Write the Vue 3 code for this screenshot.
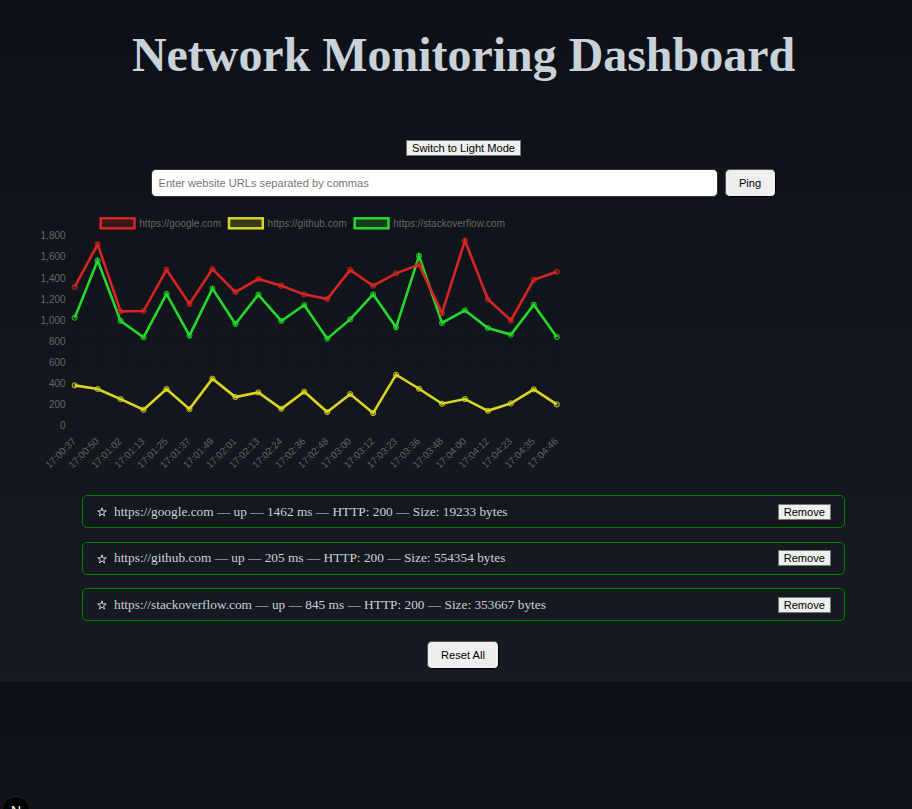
<script setup>
import { ref } from 'vue'

const urls = ref('')

const times = [
  '17:00:37', '17:00:50', '17:01:02', '17:01:13', '17:01:25', '17:01:37', '17:01:49', '17:02:01',
  '17:02:13', '17:02:24', '17:02:36', '17:02:48', '17:03:00', '17:03:12', '17:03:23', '17:03:36',
  '17:03:48', '17:04:00', '17:04:12', '17:04:23', '17:04:35', '17:04:46',
]

const series = [
  {
    url: 'https://google.com', color: '#d92424', legendX: 101, size: 19233,
    data: [1318, 1722, 1087, 1090, 1482, 1157, 1488, 1270, 1394, 1330, 1248, 1204, 1479, 1330, 1447, 1530, 1071, 1757, 1201, 1002, 1387, 1462],
  },
  {
    url: 'https://github.com', color: '#d9d521', legendX: 229.3, size: 554354,
    data: [386, 351, 256, 155, 351, 161, 449, 275, 319, 164, 326, 133, 303, 123, 487, 354, 212, 256, 145, 215, 348, 205],
  },
  {
    url: 'https://stackoverflow.com', color: '#24d92b', legendX: 355, size: 353667,
    data: [1027, 1568, 996, 841, 1252, 857, 1302, 967, 1245, 996, 1147, 828, 1011, 1248, 936, 1612, 977, 1097, 929, 866, 1150, 845],
  },
]

const ticks = [0, 200, 400, 600, 800, 1000, 1200, 1400, 1600, 1800]

// plot area, in chart coordinates
const left = 74.7
const step = 22.955
const bottom = 221.1
const height = 190

const px = (i) => left + i * step
const py = (v) => bottom - (v / 1800) * height
const points = (data) => data.map((v, i) => `${px(i)},${py(v)}`).join(' ')
const last = (data) => data[data.length - 1]
</script>

<template>
  <main class="page">
    <h1 class="title">Network Monitoring Dashboard</h1>
    <button class="plain">Switch to Light Mode</button>
    <form class="ping-form" @submit.prevent>
      <input v-model="urls" class="urls" placeholder="Enter website URLs separated by commas" />
      <button class="solid ping">Ping</button>
    </form>

    <svg class="chart" width="600" height="280" viewBox="0 0 600 280">
      <g class="grid">
        <line v-for="t in ticks" :key="t" :x1="left - 6.7" :x2="px(21)" :y1="py(t)" :y2="py(t)" />
        <line v-for="(t, i) in times" :key="t" :x1="px(i)" :x2="px(i)" :y1="py(1800)" :y2="bottom + 6.7" />
      </g>
      <g v-for="s in series" :key="s.url">
        <rect
          :x="s.legendX - 0.3" y="13.3" width="33.8" height="10" stroke-width="2.5"
          :stroke="s.color" :fill="s.color" fill-opacity="0.2"
        />
        <text class="label" :x="s.legendX + 38.3" y="21.5">{{ s.url }}</text>
      </g>
      <text v-for="t in ticks" :key="t" class="label" text-anchor="end" x="65.6" :y="py(t) + 3.2">{{ t.toLocaleString('en-US') }}</text>
      <text
        v-for="(t, i) in times" :key="t" class="label tilted" text-anchor="end"
        :transform="`translate(${px(i) + 1.8} 236.8) rotate(-45)`"
      >{{ t }}</text>
      <g v-for="s in [...series].reverse()" :key="s.url">
        <polyline :points="points(s.data)" fill="none" :stroke="s.color" stroke-width="2.6" />
        <circle
          v-for="(v, i) in s.data" :key="i" :cx="px(i)" :cy="py(v)" r="2.6"
          :fill="s.color" fill-opacity="0.2" :stroke="s.color" stroke-opacity="0.85" stroke-width="1"
        />
      </g>
    </svg>

    <ul class="sites">
      <li v-for="s in series" :key="s.url" class="site">
        <svg class="star" viewBox="0 0 10 10">
          <path d="M5 .8 6 3.9H9.3L6.6 5.8 7.6 9 5 7.1 2.4 9 3.4 5.8.7 3.9H4Z" />
        </svg>
        <span class="status">{{ s.url }} — up — {{ last(s.data) }} ms — HTTP: 200 — Size: {{ s.size }} bytes</span>
        <button class="plain">Remove</button>
      </li>
    </ul>
    <button class="solid reset">Reset All</button>
    <div class="badge">N</div>
  </main>
</template>

<style>
html {
  height: 809px;
  overflow: hidden;
  background: linear-gradient(to bottom, #0d1117, #161b22) 0 0 / 100% 682px repeat-y;
}
</style>

<style scoped>
.page {
  box-sizing: border-box;
  position: relative;
  height: 809px;
  padding-left: 15px;
  overflow: hidden;
  display: flex;
  flex-direction: column;
  align-items: center;
  color: #c9d1d9;
  font-family: "Liberation Serif", "Times New Roman", serif;
}

.title {
  margin: 27px 0 58px;
  font-size: 47.95px;
  line-height: 55px;
  white-space: nowrap;
}

button,
input {
  box-sizing: border-box;
  margin: 0;
  font-family: "Liberation Sans", Arial, sans-serif;
  font-size: 11.1px;
}

button {
  color: #000;
  background: #efefef;
  white-space: nowrap;
}

.plain {
  height: 16px;
  padding: 0 5px;
  border: 1px solid #767676;
  line-height: 14px;
}

.ping-form {
  display: flex;
  gap: 7px;
  width: 624px;
  margin-top: 13px;
}

.urls {
  flex: 1;
  height: 28px;
  margin-left: -1px;
  padding: 0 7px;
  border: 1px solid #333;
  border-radius: 5px;
  background: #fff;
}

.urls::placeholder {
  color: #757575;
}

.solid {
  height: 28px;
  padding: 0;
  border: 1px solid #000;
  border-top-color: #555;
  border-left-color: #555;
  border-radius: 5px;
}

.ping {
  width: 51px;
}

.chart {
  flex: none;
  align-self: flex-start;
  margin: 8px 0 10.2px -15px;
}

.grid {
  stroke: rgba(0, 0, 0, 0.08);
  stroke-width: 0.9;
}

.label {
  fill: #666;
  font: 10px "Liberation Sans", Arial, sans-serif;
}

.tilted {
  font-size: 9.8px;
}

.sites {
  width: 763px;
  margin: 0;
  padding: 0;
  list-style: none;
  display: flex;
  flex-direction: column;
  gap: 13.5px;
}

.site {
  box-sizing: border-box;
  height: 33px;
  padding: 0 13px 0 14px;
  border: 1px solid green;
  border-radius: 5px;
  display: flex;
  align-items: center;
}

.star {
  width: 10px;
  height: 10px;
  margin: 1px 7px 0 0;
  fill: none;
  stroke: #c9d1d9;
  stroke-width: 1;
}

.status {
  flex: 1;
  font-size: 13.33px;
  white-space: nowrap;
}

.reset {
  width: 72px;
  margin-top: 20px;
  margin-right: 1px;
}

.badge {
  position: absolute;
  left: 1px;
  top: 796px;
  width: 30px;
  height: 30px;
  box-sizing: border-box;
  border: 1px solid #242424;
  border-radius: 50%;
  background: #000;
  color: #fff;
  font: 14px/29px "Liberation Sans", Arial, sans-serif;
  text-align: center;
}
</style>
